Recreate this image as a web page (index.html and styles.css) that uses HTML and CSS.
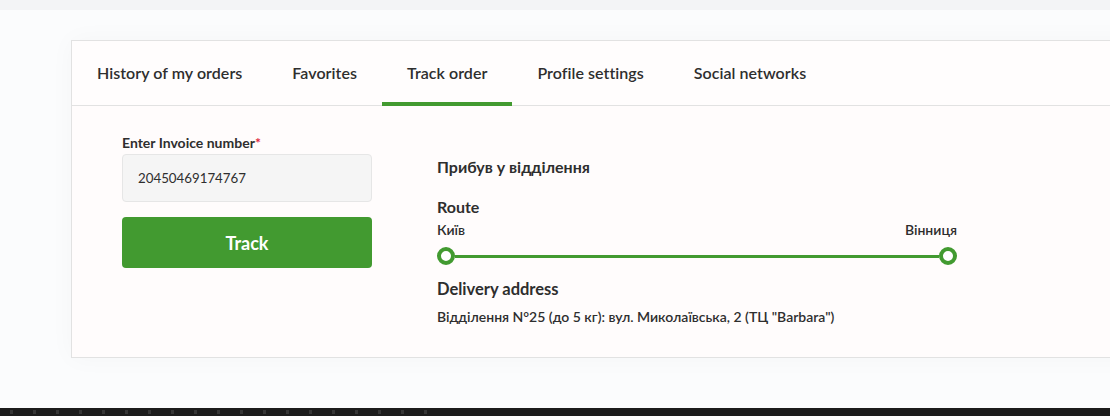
FILE: index.html
```html
<!DOCTYPE html>
<html lang="en">
<head>
    <meta charset="UTF-8">
    <meta name="viewport" content="width=device-width, initial-scale=1.0">
    <title>Track order</title>
    <link rel="stylesheet" href="styles.css">
</head>
<body>
    <div class="topbar"></div>

    <div class="page">
        <div class="account-card">
            <div class="tabs">
                <a class="tab">History of my orders</a>
                <a class="tab">Favorites</a>
                <a class="tab active">Track order</a>
                <a class="tab">Profile settings</a>
                <a class="tab">Social networks</a>
            </div>

            <div class="track-body">
                <div class="track-form">
                    <label class="field-label">Enter Invoice number<span class="req">*</span></label>
                    <input class="invoice-input" type="text" value="20450469174767">
                    <button class="track-btn">Track</button>
                </div>

                <div class="track-result">
                    <div class="status">Прибув у відділення</div>
                    <div class="section-title">Route</div>
                    <div class="route-cities">
                        <span>Київ</span>
                        <span>Вінниця</span>
                    </div>
                    <div class="route-line">
                        <span class="route-dot"></span>
                        <span class="route-bar"></span>
                        <span class="route-dot"></span>
                    </div>
                    <div class="section-title address-title">Delivery address</div>
                    <div class="address">Відділення N°25 (до 5 кг): вул. Миколаївська, 2 (ТЦ "Barbara")</div>
                </div>
            </div>
        </div>
    </div>

    <div class="footer-strip">
        <span></span><span></span><span></span><span></span><span></span><span></span><span></span><span></span><span></span><span></span><span></span><span></span><span></span><span></span><span></span><span></span><span></span><span></span><span></span>
    </div>
</body>
</html>
```

FILE: styles.css
```css
html, body {
    margin: 0;
    height: 100%;
    overflow: hidden;
}
body {
    font-family: Lato, "Open Sans", Arial, sans-serif;
    background-color: #fbfcfd;
    color: #2e2e2e;
    display: flex;
    flex-direction: column;
}
.topbar {
    height: 10px;
    background: #f3f4f6;
}
.page {
    flex: 1;
    padding: 30px 0 0 71px;
    overflow: hidden;
}
.account-card {
    width: 1100px;
    background: #fffdfd;
    border: 1px solid #e2e2e2;
    box-shadow: 0 0 24px rgba(0, 20, 60, 0.03);
}
.tabs {
    display: flex;
    height: 64px;
    border-bottom: 1px solid #e2e2e2;
}
.tab {
    display: flex;
    align-items: center;
    padding: 0 25px;
    font-size: 16px;
    font-weight: 600;
    letter-spacing: 0.05px;
    color: #2e2e2e;
    border-bottom: 4px solid transparent;
    margin-bottom: -1px;
    padding-top: 2px;
}
.tab.active {
    border-bottom-color: #429a30;
}
.track-body {
    display: flex;
    padding: 30px 50px 32px;
    background: #fffcfc;
}
.track-form {
    width: 250px;
    display: flex;
    flex-direction: column;
}
.field-label {
    font-size: 14px;
    font-weight: 700;
    line-height: 14px;
    margin-bottom: 4px;
}
.req {
    color: #e0263c;
}
.invoice-input {
    box-sizing: border-box;
    height: 48px;
    border: 1px solid #e6e6e6;
    border-radius: 4px;
    background: #f5f5f5;
    padding: 0 15px;
    font-family: inherit;
    font-size: 13.3px;
    color: #2e2e2e;
    margin: 0;
}
.track-btn {
    height: 51px;
    margin-top: 15px;
    background: #429a30;
    color: white;
    border: none;
    border-radius: 4px;
    font-family: inherit;
    font-size: 18px;
    font-weight: 700;
    cursor: pointer;
}
.track-result {
    width: 520px;
    margin-left: 65px;
    padding-top: 22px;
}
.status {
    font-size: 16px;
    font-weight: 700;
    line-height: 18px;
}
.section-title {
    font-size: 16px;
    font-weight: 700;
    line-height: 18px;
    margin-top: 22px;
}
.route-cities {
    display: flex;
    justify-content: space-between;
    font-size: 14px;
    font-weight: 600;
    line-height: 16px;
    margin-top: 6px;
}
.route-line {
    display: flex;
    align-items: center;
    margin-top: 9px;
}
.route-dot {
    width: 10px;
    height: 10px;
    border: 4px solid #429a30;
    border-radius: 50%;
    background: white;
}
.route-bar {
    flex: 1;
    height: 3px;
    background: #429a30;
}
.address-title {
    margin-top: 15px;
    font-size: 16.5px;
}
.address {
    font-size: 14px;
    font-weight: 600;
    line-height: 16px;
    margin-top: 11px;
}
.footer-strip {
    height: 8px;
    background: #1c1c1c;
    display: flex;
    gap: 20px;
    padding-left: 10px;
    align-items: center;
}
.footer-strip span {
    width: 3px;
    height: 4px;
    background: #363636;
}
```
